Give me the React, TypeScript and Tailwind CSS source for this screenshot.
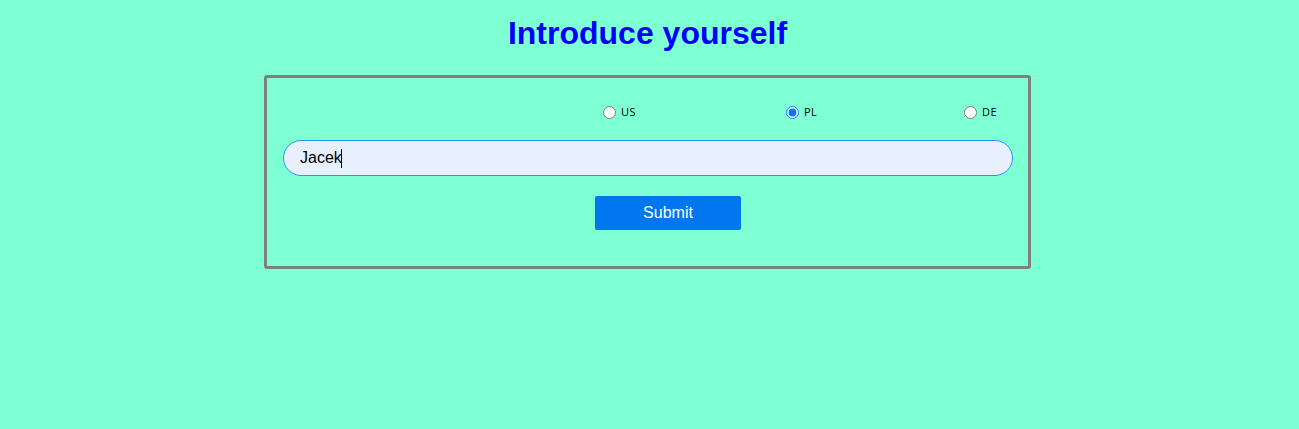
import React from "react";

export default function App() {
  const options = [
    { code: "US", w: "w-[183px]", checked: false },
    { code: "PL", w: "w-[178px]", checked: true },
    { code: "DE", w: "w-auto", checked: false },
  ];
  return (
    <div className="w-full h-[429px] bg-[#7fffd4] pt-[15px] font-['Liberation_Sans',Arial,sans-serif]">
      <h1 className="text-center pr-[4px] text-[32px] leading-[37px] font-bold text-[#0000ff]">
        Introduce yourself
      </h1>
      <form
        className="mt-[23px] ml-[264px] w-[767px] h-[194px] border-[3px] border-[#808080] rounded-[3px] pt-[27px] px-[16px]"
        onSubmit={(e) => e.preventDefault()}
      >
        <div className="flex items-center pl-[320px] h-[14px] font-['Open_Sans',sans-serif] text-[11px] text-black">
          {options.map((o) => (
            <label key={o.code} className={`flex items-center gap-[5px] ${o.w}`}>
              <input
                type="radio"
                name="country"
                defaultChecked={o.checked}
                className="m-0 w-[13px] h-[13px]"
              />
              <span className="tracking-[0.5px]">{o.code}</span>
            </label>
          ))}
        </div>
        <div
          role="textbox"
          className="mt-[21px] h-[36px] w-[730px] rounded-full border border-[#2196f3] bg-[#e8f0fe] pl-[16px] flex items-center text-[16px] text-black"
        >
          <span>Jacek</span>
          <span className="inline-block w-px h-[19px] bg-black -ml-px"></span>
        </div>
        <button
          type="submit"
          className="mt-[20px] ml-[312px] w-[146px] h-[34px] bg-[#0077ee] rounded-[2px] text-white text-[16px]"
        >
          Submit
        </button>
      </form>
    </div>
  );
}
